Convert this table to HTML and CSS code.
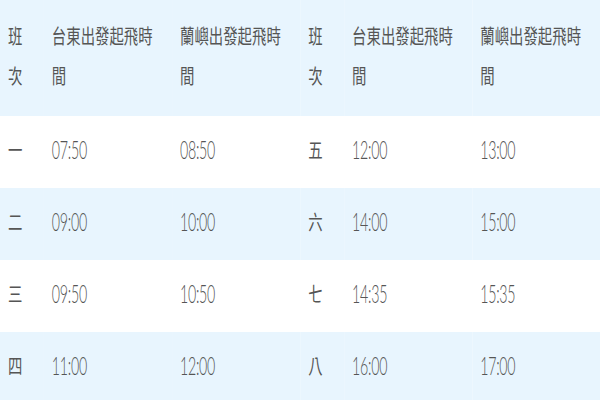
FILE: index.html
```html
<!DOCTYPE html>
<html lang="zh-Hant">
<head>
<meta charset="utf-8">
<title>班次時刻表</title>
<link rel="stylesheet" href="styles.css">
</head>
<body>
<div class="frame">
<div class="sheet">
<table class="schedule">
<colgroup>
<col class="c-no"><col class="c-time"><col class="c-time">
<col class="c-no"><col class="c-time"><col class="c-time">
</colgroup>
<thead>
<tr class="head">
<th>班次</th><th>台東出發起飛時間</th><th>蘭嶼出發起飛時間</th>
<th>班次</th><th>台東出發起飛時間</th><th>蘭嶼出發起飛時間</th>
</tr>
</thead>
<tbody>
<tr class="odd">
<td class="no">一</td><td><span class="t">07:50</span></td><td><span class="t">08:50</span></td>
<td class="no">五</td><td><span class="t">12:00</span></td><td><span class="t">13:00</span></td>
</tr>
<tr class="even">
<td class="no">二</td><td><span class="t">09:00</span></td><td><span class="t">10:00</span></td>
<td class="no">六</td><td><span class="t">14:00</span></td><td><span class="t">15:00</span></td>
</tr>
<tr class="odd">
<td class="no">三</td><td><span class="t">09:50</span></td><td><span class="t">10:50</span></td>
<td class="no">七</td><td><span class="t">14:35</span></td><td><span class="t">15:35</span></td>
</tr>
<tr class="even">
<td class="no">四</td><td><span class="t">11:00</span></td><td><span class="t">12:00</span></td>
<td class="no">八</td><td><span class="t">16:00</span></td><td><span class="t">17:00</span></td>
</tr>
</tbody>
</table>
</div>
</div>
</body>
</html>
```
FILE: styles.css
```css
html, body {
  margin: 0;
  padding: 0;
  background: #ffffff;
  overflow: hidden;
}
.frame {
  width: 600px;
  height: 400px;
  overflow: hidden;
}
.sheet {
  width: 833px;
  transform: scaleX(0.72);
  transform-origin: 0 0;
}
.schedule {
  width: 833px;
  table-layout: fixed;
  border-collapse: collapse;
  border-spacing: 0;
  color: #555555;
  font-family: "Noto Sans CJK TC", "Noto Sans CJK SC", sans-serif;
  font-size: 20px;
}
.c-no { width: 61px; }
.c-time { width: 178px; }
.head {
  background: #e8f5fe;
}
.head th {
  text-align: left;
  font-weight: 400;
  vertical-align: top;
  line-height: 40px;
  padding: 16px 20px 20px 11px;
  height: 80px;
}
tbody tr { height: 72px; }
.odd { background: #ffffff; }
.even { background: #e8f5fe; }
tbody td {
  padding: 0 10px 4px 11px;
  vertical-align: middle;
  line-height: 30px;
}
.t {
  display: inline-block;
  transform: scaleX(0.76);
  transform-origin: 0 50%;
  font-family: "Lato", "Liberation Sans", sans-serif;
  font-weight: 300;
  font-size: 26px;
  letter-spacing: -0.5px;
  color: #555555;
}
```
